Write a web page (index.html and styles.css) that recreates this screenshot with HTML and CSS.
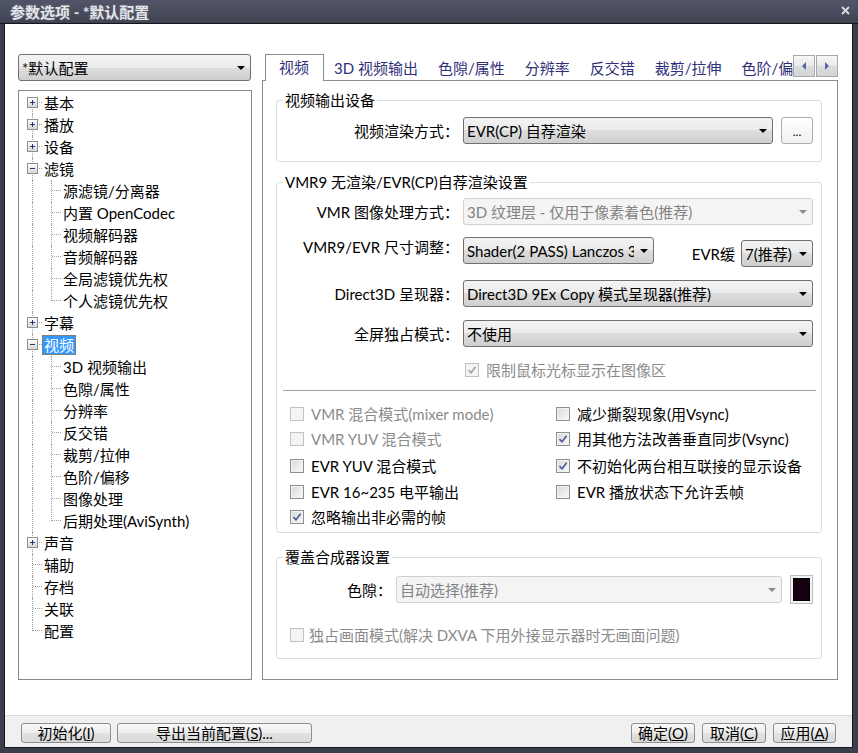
FILE: index.html
```html
<!DOCTYPE html>
<html lang="zh-CN">
<head>
<meta charset="utf-8">
<title>参数选项 - *默认配置</title>
<link rel="stylesheet" href="styles.css">
</head>
<body>
<div class="window">
  <div class="titlebar">
    <span class="title">参数选项 - *默认配置</span>
    <svg class="close" width="9" height="9" viewBox="0 0 9 9"><path d="M1 1L8 8M8 1L1 8" stroke="#d6d7de" stroke-width="2"/></svg>
  </div>
  <div class="frame">
    <div class="client">
      <div class="main">
        <div class="left">
          <div class="combo lcombo"><span class="ct">*默认配置</span><span class="arr"></span></div>
          <div class="tree">
            <div class="r"><span class="c"><i class="vb"></i><i class="h"></i><b class="bx p"></b></span><span class="tx">基本</span></div>
            <div class="r"><span class="c"><i class="vf"></i><i class="h"></i><b class="bx p"></b></span><span class="tx">播放</span></div>
            <div class="r"><span class="c"><i class="vf"></i><i class="h"></i><b class="bx p"></b></span><span class="tx">设备</span></div>
            <div class="r"><span class="c"><i class="vf"></i><i class="h"></i><b class="bx m"></b></span><span class="tx">滤镜</span></div>
            <div class="r"><span class="c"><i class="vf"></i></span><span class="c"><i class="vf"></i><i class="h"></i></span><span class="tx">源滤镜/分离器</span></div>
            <div class="r"><span class="c"><i class="vf"></i></span><span class="c"><i class="vf"></i><i class="h"></i></span><span class="tx">内置 OpenCodec</span></div>
            <div class="r"><span class="c"><i class="vf"></i></span><span class="c"><i class="vf"></i><i class="h"></i></span><span class="tx">视频解码器</span></div>
            <div class="r"><span class="c"><i class="vf"></i></span><span class="c"><i class="vf"></i><i class="h"></i></span><span class="tx">音频解码器</span></div>
            <div class="r"><span class="c"><i class="vf"></i></span><span class="c"><i class="vf"></i><i class="h"></i></span><span class="tx">全局滤镜优先权</span></div>
            <div class="r"><span class="c"><i class="vf"></i></span><span class="c"><i class="vt"></i><i class="h"></i></span><span class="tx">个人滤镜优先权</span></div>
            <div class="r"><span class="c"><i class="vf"></i><i class="h"></i><b class="bx p"></b></span><span class="tx">字幕</span></div>
            <div class="r"><span class="c"><i class="vf"></i><i class="h"></i><b class="bx m"></b></span><span class="tx sel">视频</span></div>
            <div class="r"><span class="c"><i class="vf"></i></span><span class="c"><i class="vf"></i><i class="h"></i></span><span class="tx">3D 视频输出</span></div>
            <div class="r"><span class="c"><i class="vf"></i></span><span class="c"><i class="vf"></i><i class="h"></i></span><span class="tx">色隙/属性</span></div>
            <div class="r"><span class="c"><i class="vf"></i></span><span class="c"><i class="vf"></i><i class="h"></i></span><span class="tx">分辨率</span></div>
            <div class="r"><span class="c"><i class="vf"></i></span><span class="c"><i class="vf"></i><i class="h"></i></span><span class="tx">反交错</span></div>
            <div class="r"><span class="c"><i class="vf"></i></span><span class="c"><i class="vf"></i><i class="h"></i></span><span class="tx">裁剪/拉伸</span></div>
            <div class="r"><span class="c"><i class="vf"></i></span><span class="c"><i class="vf"></i><i class="h"></i></span><span class="tx">色阶/偏移</span></div>
            <div class="r"><span class="c"><i class="vf"></i></span><span class="c"><i class="vf"></i><i class="h"></i></span><span class="tx">图像处理</span></div>
            <div class="r"><span class="c"><i class="vf"></i></span><span class="c"><i class="vt"></i><i class="h"></i></span><span class="tx">后期处理(AviSynth)</span></div>
            <div class="r"><span class="c"><i class="vf"></i><i class="h"></i><b class="bx p"></b></span><span class="tx">声音</span></div>
            <div class="r"><span class="c"><i class="vf"></i><i class="h"></i></span><span class="tx">辅助</span></div>
            <div class="r"><span class="c"><i class="vf"></i><i class="h"></i></span><span class="tx">存档</span></div>
            <div class="r"><span class="c"><i class="vf"></i><i class="h"></i></span><span class="tx">关联</span></div>
            <div class="r"><span class="c"><i class="vt"></i><i class="h"></i></span><span class="tx">配置</span></div>
          </div>
        </div>
        <div class="right">
          <div class="tabstrip">
            <div class="tabs">
              <div class="tab active">视频</div>
              <div class="tab">3D 视频输出</div>
              <div class="tab">色隙/属性</div>
              <div class="tab">分辨率</div>
              <div class="tab">反交错</div>
              <div class="tab">裁剪/拉伸</div>
              <div class="tab">色阶/偏移</div>
            </div>
            <div class="spin"><span class="sb"><i class="tl"></i></span><span class="sb"><i class="tr"></i></span></div>
          </div>
          <div class="panel">
            <fieldset class="g1">
              <legend>视频输出设备</legend>
              <div class="frow">
                <span class="lab">视频渲染方式：</span>
                <div class="combo grow"><span class="ct">EVR(CP) 自荐渲染</span><span class="arr"></span></div>
                <div class="dots">...</div>
              </div>
            </fieldset>
            <fieldset class="g2">
              <legend>VMR9 无渲染/EVR(CP)自荐渲染设置</legend>
              <div class="frow r1">
                <span class="lab">VMR 图像处理方式：</span>
                <div class="combo dis grow"><span class="ct">3D 纹理层 - 仅用于像素着色(推荐)</span><span class="arr"></span></div>
              </div>
              <div class="frow r2">
                <span class="lab">VMR9/EVR 尺寸调整：</span>
                <div class="combo shader"><span class="ct">Shader(2 PASS) Lanczos 3</span><span class="arr"></span></div>
                <div class="evr">
                  <span class="evrl">EVR缓</span>
                  <div class="combo small"><span class="ct">7(推荐)</span><span class="arr"></span></div>
                </div>
              </div>
              <div class="frow r3">
                <span class="lab">Direct3D 呈现器：</span>
                <div class="combo grow"><span class="ct">Direct3D 9Ex Copy 模式呈现器(推荐)</span><span class="arr"></span></div>
              </div>
              <div class="frow r3">
                <span class="lab">全屏独占模式：</span>
                <div class="combo grow"><span class="ct">不使用</span><span class="arr"></span></div>
              </div>
              <div class="ck limit dtext">
                <span class="cb dis"><svg viewBox="0 0 10 10"><path d="M1.5 5.2L4 7.8L8.6 1.8" fill="none" stroke="#a6a6a6" stroke-width="1.7"/></svg></span>
                <span>限制鼠标光标显示在图像区</span>
              </div>
              <div class="sep"></div>
              <div class="ckgrid">
                <div class="ck dtext"><span class="cb dis"></span><span>VMR 混合模式(mixer mode)</span></div>
                <div class="ck"><span class="cb"></span><span>减少撕裂现象(用Vsync)</span></div>
                <div class="ck dtext"><span class="cb dis"></span><span>VMR YUV 混合模式</span></div>
                <div class="ck"><span class="cb"><svg viewBox="0 0 10 10"><path d="M1.5 5.2L4 7.8L8.6 1.8" fill="none" stroke="#4a5d9a" stroke-width="1.7"/></svg></span><span>用其他方法改善垂直同步(Vsync)</span></div>
                <div class="ck"><span class="cb"></span><span>EVR YUV 混合模式</span></div>
                <div class="ck"><span class="cb"><svg viewBox="0 0 10 10"><path d="M1.5 5.2L4 7.8L8.6 1.8" fill="none" stroke="#4a5d9a" stroke-width="1.7"/></svg></span><span>不初始化两台相互联接的显示设备</span></div>
                <div class="ck"><span class="cb"></span><span>EVR 16~235 电平输出</span></div>
                <div class="ck"><span class="cb"></span><span>EVR 播放状态下允许丢帧</span></div>
                <div class="ck"><span class="cb"><svg viewBox="0 0 10 10"><path d="M1.5 5.2L4 7.8L8.6 1.8" fill="none" stroke="#4a5d9a" stroke-width="1.7"/></svg></span><span>忽略输出非必需的帧</span></div>
              </div>
            </fieldset>
            <fieldset class="g3">
              <legend>覆盖合成器设置</legend>
              <div class="frow r4">
                <span class="lab lab3">色隙：</span>
                <div class="combo dis grow"><span class="ct">自动选择(推荐)</span><span class="arr"></span></div>
                <div class="sw"><i></i></div>
              </div>
              <div class="ck excl dtext">
                <span class="cb dis"></span>
                <span>独占画面模式(解决 DXVA 下用外接显示器时无画面问题)</span>
              </div>
            </fieldset>
          </div>
        </div>
      </div>
      <div class="footer">
        <div class="btn b1">初始化(<u>I</u>)</div>
        <div class="btn b2">导出当前配置(<u>S</u>)...</div>
        <div class="spacer"></div>
        <div class="btn b3">确定(<u>O</u>)</div>
        <div class="btn b3">取消(<u>C</u>)</div>
        <div class="btn b4">应用(<u>A</u>)</div>
      </div>
    </div>
  </div>
</div>
</body>
</html>
```

FILE: styles.css
```css
html, body {
  margin: 0;
  padding: 0;
}
body {
  background: #3b3e4b;
  font-family: Lato, "Noto Sans CJK SC", sans-serif;
  font-size: 15px;
  line-height: 20px;
  color: #000;
}
.window {
  width: 858px;
  height: 753px;
  display: flex;
  flex-direction: column;
  background: #3b3e4b;
  overflow: hidden;
}
.titlebar {
  height: 23px;
  flex: none;
  border-bottom: 1px solid #15161b;
  background: linear-gradient(#525567, #3f4251);
  display: flex;
  align-items: center;
  padding: 0 8px 0 10px;
}
.title {
  flex: 1;
  color: #e3e4ea;
  font-weight: bold;
  font-size: 15px;
  text-shadow: 0 0 3px rgba(255, 255, 255, 0.2);
}
.close {
  display: block;
  margin-top: -2px;
}
.frame {
  flex: 1;
  display: flex;
  padding: 0 5px 5px 4px;
  min-width: 0;
}
.client {
  width: 847px;
  flex: none;
  min-width: 0;
  display: flex;
  flex-direction: column;
  background: #fff;
  border: 1px solid #15161b;
  border-top: none;
}
.main {
  height: 691px;
  flex: none;
  box-sizing: border-box;
  display: flex;
  gap: 10px;
  padding: 30px 14px 0 13px;
}
.left {
  width: 234px;
  flex: none;
  display: flex;
  flex-direction: column;
}
.right {
  width: 576px;
  flex: none;
  min-width: 0;
  display: flex;
  flex-direction: column;
}

/* combo boxes */
.combo {
  height: 27px;
  box-sizing: border-box;
  border: 1px solid #707070;
  border-radius: 3px;
  background: linear-gradient(#f3f3f3, #ebebeb 50%, #dddddd 50%, #cfcfcf);
  display: flex;
  align-items: center;
  padding: 0 5px 0 3px;
  min-width: 0;
}
.combo .ct {
  flex: 1;
  min-width: 0;
  white-space: nowrap;
  overflow: hidden;
}
.combo .arr {
  flex: none;
  width: 0;
  height: 0;
  margin-left: 6px;
  border-left: 4px solid transparent;
  border-right: 4px solid transparent;
  border-top: 4px solid #000;
}
.combo.dis {
  border-color: #d0d0d0;
  background: #f4f4f4;
  color: #838383;
}
.combo.dis .arr {
  border-top-color: #8c8c8c;
}
.lcombo {
  width: 233px;
}
.grow {
  flex: 1;
}

/* tree */
.tree {
  margin-top: 9px;
  height: 590px;
  box-sizing: border-box;
  border: 1px solid #828790;
  padding: 1px 0 0 4px;
}
.r {
  display: flex;
  align-items: center;
  height: 22px;
}
.c {
  display: grid;
  grid-template-columns: 9px 1px 9px;
  grid-template-rows: 10px 1px 11px;
  width: 19px;
  height: 22px;
  flex: none;
}
.c i {
  display: block;
}
.c .vf {
  grid-area: 1 / 2 / 4 / 3;
  border-left: 1px dotted #a0a0a0;
}
.c .vt {
  grid-area: 1 / 2 / 3 / 3;
  border-left: 1px dotted #a0a0a0;
}
.c .vb {
  grid-area: 2 / 2 / 4 / 3;
  border-left: 1px dotted #a0a0a0;
}
.c .h {
  grid-area: 2 / 3 / 3 / 4;
  border-top: 1px dotted #a0a0a0;
}
.c .bx {
  grid-area: 1 / 1 / 4 / 4;
  align-self: start;
  justify-self: start;
  width: 11px;
  height: 11px;
  margin: 5px 0 0 4px;
  box-sizing: border-box;
  border: 1px solid #8e8f8f;
}
.bx.p {
  background:
    linear-gradient(#1f3a80, #1f3a80) center / 5px 1px no-repeat,
    linear-gradient(#1f3a80, #1f3a80) center / 1px 5px no-repeat,
    linear-gradient(#ffffff, #d6d6d6);
}
.bx.m {
  background:
    linear-gradient(#1f3a80, #1f3a80) center / 5px 1px no-repeat,
    linear-gradient(#ffffff, #d6d6d6);
}
.tx {
  padding: 0 1px;
  border: 1px dotted transparent;
  line-height: 18px;
  white-space: nowrap;
}
.tx.sel {
  background: #3399ff;
  color: #fff;
  border-color: #cc6600;
}

/* tabs */
.tabstrip {
  display: flex;
  height: 27px;
  box-sizing: border-box;
  border-bottom: 1px solid #898c95;
  padding-left: 3px;
}
.tabs {
  flex: 1;
  min-width: 0;
  display: flex;
  align-items: flex-end;
  overflow-x: clip;
}
.tab {
  flex: none;
  height: 24px;
  line-height: 24px;
  padding: 0 10px;
  color: #2f3079;
  white-space: nowrap;
}
.tab.active {
  height: 27px;
  box-sizing: border-box;
  border: 1px solid #898c95;
  border-bottom: none;
  background: #fff;
  padding: 0 14px 0 13px;
  margin-bottom: -1px;
  line-height: 25px;
}
.spin {
  flex: none;
  display: flex;
  gap: 1px;
  align-self: flex-start;
  margin-top: 1px;
}
.sb {
  width: 22px;
  height: 22px;
  box-sizing: border-box;
  border: 1px solid #a9a9a9;
  background: linear-gradient(#f7f7f7, #e9e9e9 50%, #dcdcdc 50%, #d4d4d4);
  display: flex;
  align-items: center;
  justify-content: center;
}
.sb i {
  width: 0;
  height: 0;
  border-top: 4px solid transparent;
  border-bottom: 4px solid transparent;
}
.sb .tl {
  border-right: 4px solid #5366a3;
}
.sb .tr {
  border-left: 4px solid #5366a3;
}

/* panel */
.panel {
  height: 599px;
  box-sizing: border-box;
  border: 1px solid #898c95;
  border-top: none;
  padding: 9px 15px 0 13px;
}
fieldset {
  margin: 0;
  padding: 0 8px 17px 0;
  border: 1px solid #d5dfe5;
  border-radius: 3px;
  min-width: 0;
}
legend {
  padding: 0 2px;
  margin-left: 6px;
  line-height: 20px;
}
.frow {
  display: flex;
  align-items: center;
  margin-top: 7px;
}
.lab {
  flex: none;
  width: 182px;
  margin-right: 4px;
  text-align: right;
  white-space: nowrap;
}
.lab3 {
  width: 115px;
}
.dots {
  flex: none;
  width: 32px;
  height: 27px;
  box-sizing: border-box;
  margin-left: 8px;
  border: 1px solid #acacac;
  border-radius: 3px;
  background: linear-gradient(#fefefe, #f0f0f0);
  display: flex;
  align-items: center;
  justify-content: center;
  font-size: 12px;
  padding-top: 3px;
}
.g2 {
  margin-top: 10px;
  padding-bottom: 3px;
}
.r1 {
  margin-top: 6px;
}
.r2 {
  margin-top: 12px;
  align-items: flex-start;
}
.r3 {
  margin-top: 13px;
}
.shader {
  width: 191px;
  flex: none;
}
.evr {
  flex: 1;
  display: flex;
  align-items: center;
  justify-content: flex-end;
  margin-top: 3px;
}
.evrl {
  margin-right: 6px;
  white-space: nowrap;
}
.small {
  width: 72px;
  flex: none;
}
.ck {
  display: flex;
  align-items: center;
  gap: 7px;
  white-space: nowrap;
}
.dtext {
  color: #8b8b8b;
}
.cb {
  flex: none;
  width: 14px;
  height: 14px;
  box-sizing: border-box;
  border: 1px solid #8f8f8f;
  background: linear-gradient(135deg, #d9d9d9, #f9f9f9);
  box-shadow: inset 0 0 0 1px #f3f3f3;
  display: flex;
  align-items: center;
  justify-content: center;
}
.cb.dis {
  border-color: #c2c2c2;
  background: #f4f4f4;
  box-shadow: none;
}
.cb svg {
  width: 10px;
  height: 10px;
  display: block;
}
.limit {
  margin-top: 13px;
  height: 20px;
  padding-left: 188px;
}
.sep {
  margin: 10px -3px 0 6px;
  height: 1px;
  background: #a0a0a0;
}
.ckgrid {
  margin-top: 10px;
  padding-left: 13px;
  display: grid;
  grid-template-columns: 266px 1fr;
  grid-template-rows: 25px 26px 27px 26px 24px;
}
.g3 {
  margin-top: 14px;
  padding-bottom: 13px;
}
.r4 {
  margin-top: 8px;
}
.sw {
  flex: none;
  width: 23px;
  height: 29px;
  box-sizing: border-box;
  margin-left: 8px;
  border: 1px solid #bcbcbc;
  padding: 2px;
  background: #f4f4f4;
}
.sw i {
  display: block;
  height: 100%;
  box-sizing: border-box;
  border: 1px solid #000;
  background: #15000f;
}
.excl {
  margin-top: 21px;
  height: 20px;
  padding-left: 13px;
  gap: 5px;
}

/* footer */
.footer {
  flex: 1;
  border-top: 1px solid #dadada;
  background: #f0f0f0;
  display: flex;
  align-items: flex-start;
  gap: 6px;
  padding: 7px 16px 0 16px;
}
.spacer {
  flex: 1;
}
.btn {
  flex: none;
  height: 20px;
  box-sizing: border-box;
  border: 1px solid #8e8f8f;
  border-radius: 3px;
  background: linear-gradient(#f8f8f8, #eeeeee 50%, #e2e2e2 50%, #d9d9d9);
  display: flex;
  align-items: center;
  justify-content: center;
  line-height: 18px;
  white-space: nowrap;
}
.btn u {
  text-decoration: underline;
}
.b1 {
  width: 90px;
}
.b2 {
  width: 195px;
}
.b3 {
  width: 64px;
  margin-left: 1px;
}
.b4 {
  width: 63px;
  margin-left: 1px;
}
```
